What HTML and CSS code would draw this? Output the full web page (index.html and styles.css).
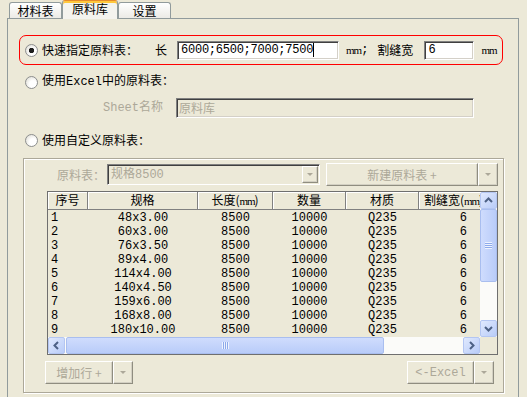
FILE: index.html
```html
<!DOCTYPE html>
<html>
<head>
<meta charset="utf-8">
<link rel="stylesheet" href="styles.css">
</head>
<body>
<div class="tabs">
  <div class="tab t1">材料表</div>
  <div class="tab sel">原料库</div>
  <div class="tab t3">设置</div>
</div>
<div class="panel">
  <div class="quick">
    <span class="radio on"></span>
    <span class="lbl cjk">快速指定原料表：</span>
    <span class="len cjk">长</span>
    <div class="edit w1">6000;6500;7000;7500<span class="caret"></span></div>
    <span class="unit"><span class="mm">mm</span><span>;</span></span>
    <span class="kerf cjk">割缝宽</span>
    <div class="edit w2">6</div>
    <span class="unit"><span class="mm">mm</span></span>
  </div>
  <div class="opt o2"><span class="radio"></span><span class="lbl">使用Excel中的原料表：</span></div>
  <div class="sheet"><span class="dis">Sheet名称</span><div class="edit disabled w3 cjk">原料库</div></div>
  <div class="opt o3"><span class="radio"></span><span class="lbl cjk">使用自定义原料表：</span></div>
  <div class="group">
    <div class="toprow">
      <span class="dis cjk">原料表：</span>
      <div class="combo">
        <span class="ctext">规格8500</span>
        <span class="cbtn"><i class="tri"></i></span>
      </div>
      <div class="split s1">
        <div class="btn main cjk">新建原料表 +</div>
        <div class="btn arr"><i class="tri"></i></div>
      </div>
    </div>
    <div class="grid">
      <div class="cells">
        <div class="row head cjk">
          <div>序号</div><div>规格</div><div>长度(<span class="mm">mm</span>)</div><div>数量</div><div>材质</div><div>割缝宽(<span class="mm">mm</span>)</div>
        </div>
        <div class="rows">
          <div class="row"><div>1</div><div>48x3.00</div><div>8500</div><div>10000</div><div>Q235</div><div>6</div></div>
          <div class="row"><div>2</div><div>60x3.00</div><div>8500</div><div>10000</div><div>Q235</div><div>6</div></div>
          <div class="row"><div>3</div><div>76x3.50</div><div>8500</div><div>10000</div><div>Q235</div><div>6</div></div>
          <div class="row"><div>4</div><div>89x4.00</div><div>8500</div><div>10000</div><div>Q235</div><div>6</div></div>
          <div class="row"><div>5</div><div>114x4.00</div><div>8500</div><div>10000</div><div>Q235</div><div>6</div></div>
          <div class="row"><div>6</div><div>140x4.50</div><div>8500</div><div>10000</div><div>Q235</div><div>6</div></div>
          <div class="row"><div>7</div><div>159x6.00</div><div>8500</div><div>10000</div><div>Q235</div><div>6</div></div>
          <div class="row"><div>8</div><div>168x8.00</div><div>8500</div><div>10000</div><div>Q235</div><div>6</div></div>
          <div class="row"><div>9</div><div>180x10.00</div><div>8500</div><div>10000</div><div>Q235</div><div>6</div></div>
        </div>
      </div>
      <div class="vscroll">
        <div class="sbtn"><svg width="15" height="15" viewBox="0 0 15 15"><polyline points="4,9 7.5,5.5 11,9" fill="none" stroke="#4D6185" stroke-width="2"/></svg></div>
        <div class="vthumb"><span class="vgrip"></span></div>
        <div class="track"></div>
        <div class="sbtn"><svg width="15" height="15" viewBox="0 0 15 15"><polyline points="4,6 7.5,9.5 11,6" fill="none" stroke="#4D6185" stroke-width="2"/></svg></div>
      </div>
      <div class="hscroll">
        <div class="sbtn"><svg width="15" height="15" viewBox="0 0 15 15"><polyline points="9,4 5.5,7.5 9,11" fill="none" stroke="#4D6185" stroke-width="2"/></svg></div>
        <div class="hthumb"><span class="hgrip"></span></div>
        <div class="track"></div>
        <div class="sbtn"><svg width="15" height="15" viewBox="0 0 15 15"><polyline points="6,4 9.5,7.5 6,11" fill="none" stroke="#4D6185" stroke-width="2"/></svg></div>
      </div>
      <div class="corner"></div>
    </div>
    <div class="botrow">
      <div class="split">
        <div class="btn b1 cjk">增加行 +</div>
        <div class="btn arr"><i class="tri"></i></div>
      </div>
      <div class="split">
        <div class="btn b2">&lt;-Excel</div>
        <div class="btn arr"><i class="tri"></i></div>
      </div>
    </div>
  </div>
</div>
</body>
</html>
```
FILE: styles.css
```css
html, body {
  margin: 0;
  height: 100%;
  overflow: hidden;
}
body {
  background: #ECE9D8;
  font-family: "Liberation Mono", "Noto Sans CJK SC", monospace;
  font-size: 12px;
  line-height: 14px;
  color: #000;
}
.cjk {
  font-family: "Noto Sans CJK SC", sans-serif;
}
.mm {
  font-family: "Liberation Serif", serif;
  font-size: 11px;
  letter-spacing: -1px;
}

/* tabs */
.tabs {
  display: flex;
  align-items: flex-end;
  height: 19px;
  padding-left: 9px;
  margin-bottom: -1px;
  position: relative;
  z-index: 1;
}
.tab {
  box-sizing: border-box;
  height: 16px;
  margin-bottom: 1px;
  border: 1px solid #919B9C;
  border-bottom: none;
  border-radius: 3px 3px 0 0;
  background: linear-gradient(#FFFFFF, #ECEBE6);
  display: flex;
  align-items: center;
  justify-content: center;
  font-family: "Noto Sans CJK SC", sans-serif;
  font-size: 12px;
}
.t1 { width: 53px; }
.t3 { width: 53px; }
.sel {
  width: 56px;
  height: 19px;
  margin-bottom: 0;
  border-top: 1px solid #E68B2C;
  box-shadow: inset 0 2px #FFC83C;
  background: #F4F3EE;
  padding-bottom: 2px;
}

/* panel */
.panel {
  margin-left: 7px;
  width: 512px;
  height: 379px;
  box-sizing: border-box;
  border: 1px solid #919B9C;
  border-bottom: none;
  background: #ECE9D8;
  overflow: hidden;
}
.quick {
  margin: 16px 0 0 11px;
  width: 484px;
  height: 30px;
  box-sizing: border-box;
  border: 1px solid #FF0000;
  border-radius: 7px;
  display: flex;
  align-items: center;
  padding-left: 5px;
}
.radio {
  flex: none;
  width: 13px;
  height: 13px;
  box-sizing: border-box;
  border: 1px solid #8C8E8E;
  border-radius: 50%;
  background: radial-gradient(circle at 65% 65%, #FFFFFF 35%, #D8D6CC 100%);
}
.radio.on {
  background: radial-gradient(circle, #1E1E1E 2.4px, transparent 3px),
              radial-gradient(circle at 65% 65%, #FFFFFF 35%, #D8D6CC 100%);
}
.lbl { margin-left: 4px; }
.len { margin-left: 17px; }
.edit {
  box-sizing: border-box;
  height: 19px;
  border: 1px solid;
  border-color: #808080 #FFFFFF #FFFFFF #808080;
  box-shadow: inset 1px 1px #404040, inset -1px -1px #D4D0C8;
  background: #FFFFFF;
  padding: 0 3px;
  display: flex;
  align-items: center;
  white-space: nowrap;
}
.caret {
  width: 1px;
  height: 14px;
  background: #000;
}
.w1 { width: 162px; margin-left: 10px; letter-spacing: -0.25px; }
.unit { margin-left: 7px; display: flex; align-items: center; }
.kerf { margin-left: 9px; }
.w2 { width: 50px; margin-left: 11px; }

.opt {
  display: flex;
  align-items: center;
  height: 16px;
  margin-left: 17px;
}
.o2 { margin-top: 9px; }
.o3 { margin-top: 14px; }
.sheet {
  display: flex;
  align-items: center;
  height: 20px;
  margin: 8px 0 0 95px;
}
.dis { color: #ACA899; }
.edit.disabled {
  background: #ECE9D8;
  color: #ACA899;
  padding-left: 2px;
}
.w3 { width: 298px; height: 20px; margin-left: 13px; }

/* group */
.group {
  margin: 10px 0 0 15px;
  width: 481px;
  height: 235px;
  box-sizing: border-box;
  border: 1px solid #ACA899;
  box-shadow: inset 1px 1px #FFFFFF, 1px 1px #FFFFFF;
}
.toprow {
  display: flex;
  align-items: center;
  height: 23px;
  margin-top: 4px;
  padding-left: 33px;
}
.combo {
  margin-left: 2px;
  width: 213px;
  height: 21px;
  box-sizing: border-box;
  border: 1px solid;
  border-color: #808080 #FFFFFF #FFFFFF #808080;
  box-shadow: inset 1px 1px #404040;
  display: flex;
  align-items: center;
  padding: 1px 1px 1px 2px;
}
.ctext {
  flex: 1;
  color: #ACA899;
  padding-left: 1px;
}
.cbtn {
  width: 16px;
  height: 17px;
  box-sizing: border-box;
  border: 1px solid;
  border-color: #FFFFFF #8F8D80 #8F8D80 #FFFFFF;
  box-shadow: inset -1px -1px #D3D0C3;
  display: flex;
  align-items: center;
  justify-content: center;
}
.tri {
  width: 0;
  height: 0;
  border-left: 3px solid transparent;
  border-right: 3px solid transparent;
  border-top: 3px solid #ACA899;
}
.split { display: flex; }
.s1 { margin-left: 6px; }
.btn {
  box-sizing: border-box;
  height: 23px;
  border: 1px solid;
  border-color: #FFFFFF #8F8D80 #8F8D80 #FFFFFF;
  box-shadow: inset -1px -1px #D3D0C3;
  background: #ECE9D8;
  color: #ACA899;
  display: flex;
  align-items: center;
  justify-content: center;
  white-space: nowrap;
}
.main { width: 152px; }
.arr { width: 20px; }
.b1 { width: 68px; }
.b2 { width: 67px; }

/* grid */
.grid {
  margin: 5px 0 0 23px;
  width: 451px;
  height: 164px;
  box-sizing: border-box;
  border: 1px solid #6F6F6F;
  display: grid;
  grid-template-columns: 432px 17px;
  grid-template-rows: 145px 17px;
}
.cells {
  overflow: hidden;
  background: #ECE9D8;
}
.row {
  display: grid;
  grid-template-columns: 40px 110px 75px 73px 73px 70px;
  width: 441px;
  height: 14px;
  line-height: 14px;
  white-space: nowrap;
}
.row > div { text-align: center; }
.row > div:first-child { text-align: left; padding-left: 3px; }
.row > div:last-child { text-align: right; padding-right: 22px; }
.head {
  height: 18px;
}
.head > div {
  box-sizing: border-box;
  line-height: 16px;
  border-right: 1px solid #808080;
  border-bottom: 1px solid #808080;
  box-shadow: inset 1px 1px #FFFFFF;
}
.head > div:first-child,
.head > div:last-child { text-align: center; padding: 0; }
.rows { padding-top: 1px; }

.vscroll {
  display: flex;
  flex-direction: column;
  background: #FBFBF9;
}
.hscroll {
  display: flex;
  background: #FBFBF9;
}
.sbtn {
  flex: none;
  width: 17px;
  height: 17px;
  box-sizing: border-box;
  border: 1px solid #B4C6F2;
  border-radius: 2px;
  background: linear-gradient(135deg, #E0E9FE, #B9CCF8);
  display: flex;
  align-items: center;
  justify-content: center;
}
.track { flex: 1; }
.vthumb {
  height: 73px;
  box-sizing: border-box;
  border: 1px solid #A9BEEF;
  border-radius: 2px;
  background: linear-gradient(90deg, #CFDCFD, #B9CCF9);
  display: flex;
  align-items: center;
  justify-content: center;
}
.vgrip {
  width: 7px;
  height: 7px;
  background: repeating-linear-gradient(to bottom, #EEF3FE 0 1px, #8DAAEB 1px 2px);
}
.hthumb {
  width: 318px;
  margin-left: 1px;
  box-sizing: border-box;
  border: 1px solid #A9BEEF;
  border-radius: 2px;
  background: linear-gradient(180deg, #CFDCFD, #B9CCF9);
  display: flex;
  align-items: center;
  justify-content: center;
}
.hgrip {
  width: 7px;
  height: 7px;
  background: repeating-linear-gradient(to right, #EEF3FE 0 1px, #8DAAEB 1px 2px);
}
.corner { background: #ECE9D8; }

.botrow {
  display: flex;
  justify-content: space-between;
  margin-top: 6px;
  padding: 0 9px 0 21px;
}
```
